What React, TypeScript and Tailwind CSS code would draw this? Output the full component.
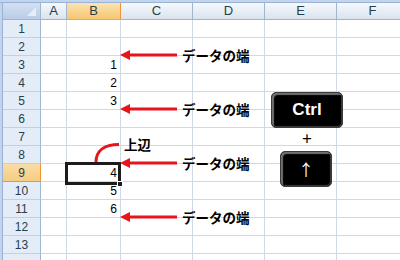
import React from "react";

const colW = ["w-[26px]", "w-[54px]", "w-[72px]", "w-[72px]", "w-[72px]", "w-[72px]"];
const colL = ["A", "B", "C", "D", "E", "F"];
const values: Record<number, string> = { 3: "1", 4: "2", 5: "3", 9: "4", 10: "5", 11: "6" };

function Arrow({ y }: { y: number }) {
  return (
    <g>
      <line x1={127} y1={y} x2={177} y2={y} stroke="#e8141b" strokeWidth={3} />
      <polygon points={`120,${y} 130,${y - 5} 130,${y + 5}`} fill="#e8141b" />
    </g>
  );
}

export default function App() {
  const rows = Array.from({ length: 14 }, (_, i) => i + 1);
  return (
    <div
      className="w-[400px] h-[260px] overflow-hidden bg-white relative flex flex-col"
      style={{ fontFamily: '"Liberation Sans", Arial, sans-serif' }}
    >
      <div className="h-[3px] shrink-0 bg-[#c3d5ee] border-b border-[#9ab2d3]" />
      <div className="flex flex-1 min-h-0">
        <div className="w-[3px] shrink-0 bg-[#c3d5ee] border-r border-[#9ab2d3]" />
        <div className="flex flex-col flex-1 min-w-0">
          {/* header row */}
          <div className="flex h-[17px] shrink-0 border-b border-[#9eb6ce]">
            <div className="w-[38px] shrink-0 border-r border-[#9eb6ce] bg-gradient-to-b from-[#d3e0f2] to-[#b9cce8] relative">
              <div className="absolute right-[4px] bottom-[3px] w-0 h-0 border-l-[9px] border-l-transparent border-b-[9px] border-b-[#e6edf7]" />
            </div>
            {colL.map((l, i) =>
              l === "B" ? (
                <div
                  key={l}
                  className={`${colW[i]} shrink-0 border-r border-[#f29436] bg-gradient-to-b from-[#fbe3b0] to-[#f5c66f] flex items-center justify-center text-[13px] text-[#263f4c]`}
                >
                  {l}
                </div>
              ) : (
                <div
                  key={l}
                  className={`${colW[i]} shrink-0 border-r border-[#9eb6ce] bg-gradient-to-b from-[#f6f9fc] to-[#dae3ee] flex items-center justify-center text-[13px] text-[#263f4c]`}
                >
                  {l}
                </div>
              )
            )}
          </div>
          {rows.map((r) => (
            <div key={r} className="flex h-[18px] shrink-0">
              {r === 9 ? (
                <div className="w-[38px] shrink-0 border-r border-b border-[#f29436] bg-gradient-to-b from-[#f9dca5] to-[#f6cd83] flex items-center justify-center text-[12px] text-[#263f4c]">
                  {r}
                </div>
              ) : (
                <div className="w-[38px] shrink-0 border-r border-b border-r-[#9eb6ce] border-b-[#c2d0e2] bg-[#e4ecf7] flex items-center justify-center text-[12px] text-[#263f4c]">
                  {r < 14 ? r : ""}
                </div>
              )}
              {colL.map((l, i) => (
                <div
                  key={l}
                  className={`${colW[i]} shrink-0 border-r border-b border-[#d0d7e5] flex items-end justify-end pr-[3px] pb-[1px] text-[12px] leading-[14px] text-black`}
                >
                  {l === "B" ? values[r] ?? "" : ""}
                </div>
              ))}
            </div>
          ))}
        </div>
      </div>

      {/* selected cell B9 */}
      <div className="absolute left-[65px] top-[162px] w-[56px] h-[23px] border-[3px] border-[#1c1c1c]" />
      <div className="absolute left-[117px] top-[181px] w-[6px] h-[6px] bg-[#1c1c1c] border border-white" />

      {/* arrows */}
      <svg className="absolute left-0 top-0 pointer-events-none" width={400} height={260}>
        <Arrow y={55} />
        <Arrow y={109} />
        <Arrow y={163} />
        <Arrow y={217} />
        <path d="M96 162 C96 151 104 144.5 119 144.5" stroke="#e8141b" strokeWidth={3} fill="none" />
      </svg>

      {/* labels */}
      {[46, 100, 154, 208].map((t) => (
        <div
          key={t}
          className="absolute left-[182px] text-[13.5px] leading-[18px] font-bold text-black whitespace-nowrap"
          style={{ top: t, fontFamily: '"Noto Sans CJK JP", sans-serif' }}
        >
          データの端
        </div>
      ))}
      <div
        className="absolute left-[124px] top-[135px] text-[13.5px] leading-[18px] font-bold text-black whitespace-nowrap"
        style={{ fontFamily: '"Noto Sans CJK JP", sans-serif' }}
      >
        上辺
      </div>

      {/* keys */}
      <div className="absolute left-[271px] top-[92px] w-[72px] h-[36px] rounded-[5px] bg-black border border-[#3a3a3a] shadow-[inset_2px_2px_1px_#707070,inset_-1px_-1px_1px_#3c3c3c] flex items-center justify-center text-white font-bold text-[17px]">
        Ctrl
      </div>
      <div
        className="absolute left-[297px] top-[128px] w-[20px] h-[20px] flex items-center justify-center text-[17px] leading-[20px] text-black"
        style={{ fontFamily: '"Noto Sans CJK JP", sans-serif' }}
      >
        +
      </div>
      <div
        className="absolute left-[280px] top-[151px] w-[52px] h-[36px] rounded-[5px] bg-black border border-[#3a3a3a] shadow-[inset_2px_2px_1px_#707070,inset_-1px_-1px_1px_#3c3c3c] flex items-center justify-center text-white text-[16px] leading-[20px]"
        style={{ fontFamily: '"Noto Sans CJK JP", sans-serif' }}
      >
        ↑
      </div>
    </div>
  );
}
